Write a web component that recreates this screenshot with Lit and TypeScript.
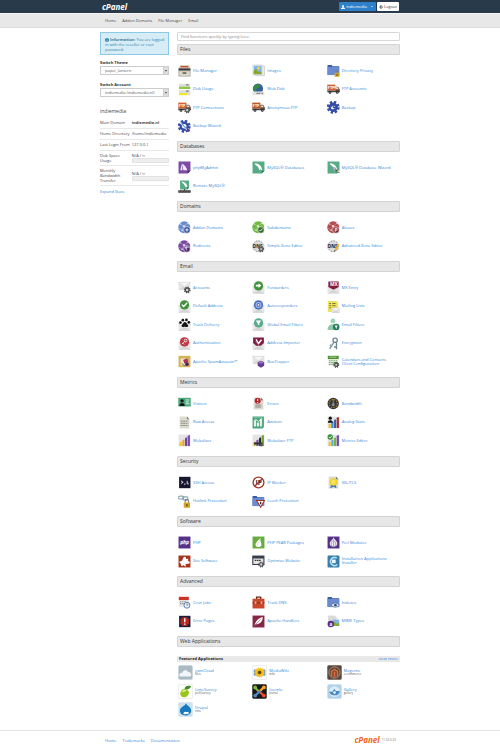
import { LitElement, html, css, svg, nothing } from "lit";
import { customElement, property } from "lit/decorators.js";

type Drawing = ReturnType<typeof svg>;

const gear = (cx: number, cy: number, r: number, color: string, hole = "#fff") => svg`
  <g transform="translate(${cx} ${cy})">
    <circle r=${r} fill="none" stroke=${color} stroke-width=${r * 0.5} stroke-dasharray="${r * 0.45} ${r * 0.335}"></circle>
    <circle r=${r * 0.68} fill=${hole} stroke=${color} stroke-width=${r * 0.45}></circle>
  </g>`;

const envelope = (y = 20) => svg`
  <rect x="2" y=${y} width="44" height="27" rx="2" fill="#e6e6e6"></rect>
  <path d="M2 ${y + 27} L20 ${y + 14} h8 L46 ${y + 27}z" fill="#d6d6d6"></path>
  <path d="M2 ${y} h44 L24 ${y + 17}z" fill="#f6f6f6" stroke="#c4c4c4" stroke-width="1.5"></path>`;

const mailWith = (color: string, glyph: Drawing) => svg`
  ${envelope(20)}<circle cx="24" cy="18" r="17" fill=${color}></circle>${glyph}`;

const folder = svg`
  <path d="M2 4h15l3 4h25v32H2z" fill="#3a5ba8"></path>
  <path d="M2 11h43v30H2z" fill="#6a8bd2"></path>`;

const lock = (x: number, y: number) => svg`
  <g transform="translate(${x} ${y})">
    <path d="M4 9V5a5 5 0 0 1 10 0v4" fill="none" stroke="#777" stroke-width="3"></path>
    <rect y="8" width="18" height="15" rx="1" fill="#d3a528"></rect>
    <path d="M7 13h4v6H7z" fill="#5d4509"></path>
  </g>`;

const truck = (color: string) => svg`
  <rect x="1" y="6" width="30" height="22" fill=${color}></rect>
  <text x="3" y="22" font-size="14" font-weight="bold" fill="#fff">FTP</text>
  <path d="M31 14h10l6 9v10H31z" fill="#7a4a35"></path>
  <path d="M34 17h6l3 6h-9z" fill="#e4eaf0"></path>
  <path d="M1 28h46v6H1z" fill="#444"></path>
  <circle cx="11" cy="35" r="5" fill="#222"></circle><circle cx="11" cy="35" r="2" fill="#bbb"></circle>
  <circle cx="38" cy="35" r="5" fill="#222"></circle><circle cx="38" cy="35" r="2" fill="#bbb"></circle>`;

const globe = (color: string, badge: Drawing) => svg`
  <circle cx="23" cy="23" r="22" fill=${color}></circle>
  <g fill="none" stroke="#fff" stroke-opacity=".5" stroke-width="2">
    <path d="M8 10l14 9 15-11M22 19l-7 15-12-8M22 19l18 7M15 34l12 9"></path></g>
  <g fill="#fff" fill-opacity=".7"><circle cx="22" cy="19" r="4"></circle><circle cx="8" cy="11" r="3"></circle>
    <circle cx="37" cy="9" r="3"></circle><circle cx="15" cy="34" r="3"></circle></g>
  ${badge}`;

const badge = (color: string, glyph: string) => svg`
  <circle cx="33" cy="33" r="12" fill=${color} stroke="#fff" stroke-width="2"></circle>
  <path d=${glyph} fill="none" stroke="#fff" stroke-width="3"></path>`;

const dns = (extra: Drawing) => svg`
  <circle cx="23" cy="23" r="20" fill="#ddd" stroke="#555" stroke-width="3" stroke-dasharray="3 3"></circle>
  <path d="M1 15h44v17H1z" fill="#d2d2d2"></path>
  <text x="3" y="29" font-size="17" font-weight="bold" fill="#222">DNS</text>${extra}`;

const dolphin = svg`
  <path d="M2 2h44v34L36 46H2z" fill="#57ab86"></path><path d="M36 46V36h10z" fill="#2f7a59"></path>
  <path d="M9 8c15 0 27 8 29 27l-8-5-3 6c-1-12-7-19-18-24 6 0 6-2 0-4z" fill="#fff"></path>`;

const bars = (colors: string[]) => svg`
  <rect x="2" y="2" width="44" height="44" fill="#e4e4e4"></rect>
  ${colors.map((c, i) => svg`<path d="M${6 + i * 10} ${32 - i * 8}l3-3h5V44h-8z" fill=${c}></path>`)}`;

const sheet = (fill: string) => svg`
  <path d="M6 2h27l9 10v34H6z" fill=${fill}></path><path d="M33 2v10h9z" fill="#777"></path>`;

const square = (color: string, inner: Drawing) => svg`
  <path d="M2 2h44v44H2z" fill=${color}></path>${inner}`;

const bee = svg`
  <rect x="1" y="12" width="46" height="24" fill="#5a8ec4"></rect>
  <circle cx="24" cy="24" r="17" fill="#f2b91c" stroke="#f7d034" stroke-width="7" stroke-dasharray="5 3"></circle>
  <circle cx="24" cy="24" r="7" fill="#5e4512"></circle>`;

const tile = (fill: string, edge: string, inner: Drawing) => svg`
  <rect x="1" y="1" width="46" height="46" rx="6" fill=${fill} stroke=${edge} stroke-width="2"></rect>${inner}`;

const ICONS: Record<string, Drawing> = {
  fileManager: svg`
    <path d="M7 5h34l5 12H2z" fill="#d9c9a4"></path><path d="M10 8h28v4H10z" fill="#b8322c"></path>
    <path d="M2 16h44v9H2z" fill="#393a3f"></path><path d="M3 25h42v20H3z" fill="#dcd8cb" stroke="#8d8778" stroke-width="2"></path>
    <path d="M17 30h14v7H17z" fill="#77736a"></path>`,
  images: svg`
    <path d="M12 7h34v36H12z" fill="#eee" stroke="#bbb" stroke-width="2"></path>
    <path d="M3 3h36v38H3z" fill="#fff" stroke="#ccc" stroke-width="2"></path>
    <path d="M6 6h30v32H6z" fill="#80b8ec"></path><circle cx="24" cy="15" r="6" fill="#f4d128"></circle>
    <path d="M6 38V26l8-9 10 13 5-5 7 9v4z" fill="#86a82c"></path>`,
  dirPrivacy: svg`${folder}${lock(28, 24)}`,
  diskUsage: svg`
    <rect x="4" y="3" width="41" height="19" fill="#ddd"></rect><path d="M4 14h41v8H4z" fill="#8cc63c"></path>
    <rect x="4" y="26" width="41" height="19" fill="#ddd"></rect><path d="M4 37h29v8H4z" fill="#ecec20"></path>
    <path d="M30 7h9M30 30h9" stroke="#444" stroke-width="3"></path>`,
  webDisk: svg`
    <circle cx="22" cy="21" r="19" fill="#35609c"></circle><path d="M4 20C7 8 20 0 31 7l-6 11-8 2-5 12c-5-3-8-7-8-12z" fill="#3c8a42"></path>
    <rect x="1" y="31" width="45" height="14" rx="2" fill="#e5e5e5"></rect><path d="M16 38h15M35 38h6" stroke="#555" stroke-width="3"></path>`,
  ftp: svg`${truck("#d3622c")}<circle cx="31" cy="16" r="5" fill="#f6d6b0"></circle>`,
  ftpConn: svg`${truck("#cf622d")}${gear(34, 34, 9, "#555", "#ddd")}`,
  ftpAnon: truck("#bb562a"),
  backup: svg`${gear(23, 23, 19, "#344ca8")}<path d="M15 23a8 8 0 1 1 8 8M23 17v7h6" fill="none" stroke="#344ca8" stroke-width="4"></path>`,
  backupWizard: svg`${gear(23, 23, 19, "#344ca8")}<path d="M7 8l29 31" stroke="#cfe0f4" stroke-width="6"></path>
    <path d="M13 13l24 25" stroke="#3b6cc0" stroke-width="3"></path><circle cx="38" cy="38" r="6" fill="#673594"></circle>`,
  phpMyAdmin: svg`<path d="M2 2h44v34L36 46H2z" fill="#7d4ba3"></path><path d="M36 46V36h10z" fill="#50277a"></path>
    <path d="M14 9c10 5 18 14 20 25H20zM9 34c1-9 3-16 4-23l4 23z" fill="#f2eaf8"></path>`,
  mysql: dolphin,
  mysqlWizard: svg`${dolphin}<path d="M24 25l21 18" stroke="#555" stroke-width="5"></path><circle cx="28" cy="28" r="5" fill="#c9a2df"></circle><circle cx="42" cy="38" r="4" fill="#e2d9a1"></circle>`,
  mysqlRemote: svg`<g transform="translate(6 0) scale(.76)">${dolphin}</g><path d="M24 34v6" stroke="#333" stroke-width="4"></path><path d="M1 38h46v9H1z" fill="#333"></path><path d="M4 42h40" stroke="#aaa" stroke-width="2" stroke-dasharray="3 3"></path>`,
  addon: globe("#688bd0", badge("#2c479c", "M33 26v14M26 33h14")),
  subdomain: globe("#70b840", badge("#376f2c", "M27 33l4 4 8-9")),
  alias: globe("#b64b50", badge("#82202a", "M30 40V27h7v7h-7")),
  redirect: globe("#794aa1", badge("#512674", "M39 28c-10-5-14 7-5 9M32 32l-5-4 7-4")),
  zone: dns(gear(34, 34, 9, "#555", "#bbb")),
  zoneAdv: dns(svg`<path d="M26 43l4-11 11-18 5 4-11 18z" fill="#edb227"></path><path d="M26 43l2-6 4 3z" fill="#333"></path>`),
  mail: svg`${envelope(5)}${gear(34, 33, 10, "#444", "#ddd")}`,
  forward: mailWith("#44923c", svg`<path d="M14 14h10V8l11 9-11 9v-6H14z" fill="#fff"></path>`),
  mx: svg`${envelope(19)}<path d="M5 2h38v20L24 32 5 22z" fill="#841b3b"></path><text x="11" y="20" font-size="18" font-weight="bold" fill="#fff">MX</text>`,
  check: mailWith("#43923b", svg`<path d="M14 17l7 7 13-14" fill="none" stroke="#fff" stroke-width="5"></path>`),
  auto: mailWith("#4c70c0", svg`<circle cx="24" cy="18" r="9" fill="none" stroke="#a7bbec" stroke-width="4"></circle><circle cx="24" cy="18" r="3" fill="#fff"></circle>`),
  lists: svg`<path d="M3 4h32l6 6v34H3z" fill="#eee25c"></path><path d="M8 13h7M19 13h13M8 21h7M19 21h13M8 29h7" stroke="#6a6636" stroke-width="3"></path><g transform="translate(16 17) scale(.68)">${envelope(18)}</g>`,
  paw: svg`${envelope(20)}<g fill="#161616"><path d="M15 32c-5-5 1-8 4-13 4-6 10-5 13 0 3 5 9 8 4 13-5 4-8-1-12 0-4 0-6 3-9 0z"></path><circle cx="9" cy="17" r="5"></circle><circle cx="18" cy="8" r="5"></circle><circle cx="31" cy="7" r="5"></circle><circle cx="40" cy="16" r="5"></circle></g>`,
  filter: mailWith("#57ad8b", svg`<path d="M14 9h20l-7 10v8l-6-3v-5z" fill="#fff"></path>`),
  userFilter: svg`<circle cx="22" cy="11" r="9" fill="#9fd3b7"></circle><path d="M2 44c0-14 8-21 20-21s18 7 20 21z" fill="#8fc9aa"></path><circle cx="34" cy="33" r="12" fill="#207b57"></circle><path d="M28 28h12l-4 6v6l-4-2v-4z" fill="#fff"></path>`,
  auth: mailWith("#bd3944", svg`<circle cx="28" cy="13" r="5" fill="none" stroke="#fff" stroke-width="3"></circle><path d="M24 17l-9 9M18 23l4 4" stroke="#fff" stroke-width="3"></path>`),
  importer: svg`${envelope(20)}<path d="M4 2h40v20L33 32H15L4 22z" fill="#812144"></path><path d="M15 9l9 15 11-14" stroke="#fff" stroke-width="5" fill="none"></path><path d="M15 17l9 9" stroke="#d7a6b8" stroke-width="3"></path>`,
  keys: svg`<g fill="none" stroke="#6e8797" stroke-width="5"><circle cx="30" cy="12" r="8"></circle><path d="M26 19L10 43M18 34l-7-5M35 21v24M34 37h-8"></path></g><path d="M24 19L8 43" stroke="#b8cbd4" stroke-width="2"></path>`,
  spam: svg`<path d="M2 3h44v42H2z" fill="#d3b65a"></path><path d="M10 13h24v25H10z" fill="#f2e8c8"></path><path d="M19 18l15-6 4 14-14 6z" fill="#aa3165"></path><circle cx="33" cy="34" r="7" fill="#482d53"></circle><path d="M13 31l13 10" stroke="#555" stroke-width="3"></path>`,
  box: svg`${envelope(5)}<path d="M21 27l12-6 12 6v13l-12 7-12-7z" fill="#673b91"></path><path d="M21 27l12 6 12-6-12-6z" fill="#9570b8"></path>`,
  calendar: svg`<rect x="3" y="3" width="40" height="38" fill="#eee"></rect><path d="M3 3h40v12H3z" fill="#4b922f"></path><path d="M8 8h27" stroke="#fff" stroke-width="2"></path><path d="M8 21h29M8 28h29M8 35h20" stroke="#6ba852" stroke-width="4" stroke-dasharray="5 3"></path>${gear(34, 36, 9, "#444", "#ccc")}`,
  visitors: svg`<rect x="1" y="3" width="46" height="32" fill="#49a77b"></rect><circle cx="15" cy="14" r="6" fill="#151515"></circle><path d="M5 33c0-15 20-15 20 0z" fill="#151515"></path><path d="M28 11h14M28 18h12M28 25h14" stroke="#fff" stroke-width="3"></path>`,
  errors: svg`${sheet("#ddd9cf")}<path d="M12 30h22M12 37h22" stroke="#777" stroke-width="3"></path><circle cx="21" cy="14" r="11" fill="#b52025"></circle><path d="M21 6v9M21 18v4" stroke="#fff" stroke-width="4"></path>`,
  bandwidth: svg`<circle cx="23" cy="24" r="21" fill="#353535"></circle><circle cx="23" cy="24" r="15" fill="none" stroke="#be8f3c" stroke-width="4" stroke-dasharray="4 5"></circle><path d="M23 8v18" stroke="#7cba48" stroke-width="3"></path><circle cx="23" cy="28" r="6" fill="#888"></circle>`,
  raw: svg`${sheet("#dcdccc")}<path d="M10 19h28M10 27h28M10 35h28" stroke="#777" stroke-width="3" stroke-dasharray="7 2"></path>`,
  awstats: svg`<path d="M2 2h42v39l-5 5H2z" fill="#4aa57b"></path><path d="M7 6h31M8 16h6v22H8zM19 25h6v13h-6zM30 11h6v27h-6z" fill="#fff" stroke="#fff"></path><path d="M12 12l13 8 12-12" stroke="#fff" stroke-width="3" fill="none"></path>`,
  analog: svg`${bars(["#edc12f", "#4286ca", "#385eaa", "#a82c26"])}<circle cx="12" cy="8" r="6" fill="#111"></circle><path d="M3 25c0-12 18-12 18 0z" fill="#111"></path>`,
  webalizer: bars(["#ebc72b", "#eba12c", "#6a45a2", "#7a4caa"]),
  webalizerFtp: svg`${bars(["#ebc72b", "#7550a8", "#282828", "#6e9f31"])}<path d="M7 31h31v8H7z" fill="#333"></path><circle cx="34" cy="40" r="6" fill="#555"></circle>`,
  metrics: svg`${bars(["#eec62f", "#58add8", "#78b23b", "#7546a6"])}<circle cx="12" cy="11" r="10" fill="#3f8f3c"></circle><path d="M7 11l4 4 7-8" fill="none" stroke="#fff" stroke-width="3"></path>`,
  ssh: svg`<rect x="4" y="3" width="42" height="42" fill="#16172e"></rect><path d="M11 18l8 5-8 5M22 30h6M34 18v11h6" fill="none" stroke="#fff" stroke-width="3"></path>`,
  ipBlock: svg`<circle cx="24" cy="24" r="20" fill="#fff" stroke="#9d392b" stroke-width="5"></circle><text x="13" y="33" font-size="24" font-weight="bold" fill="#222">IP</text><path d="M38 10L10 38" stroke="#9d392b" stroke-width="5"></path>`,
  ssl: svg`${sheet("#dadad2")}<path d="M15 32l-3 13 12-5 11 5-3-13z" fill="#3975ba"></path><circle cx="24" cy="22" r="14" fill="#f0cf25"></circle><circle cx="24" cy="22" r="9" fill="#fae35b"></circle>`,
  hotlink: svg`<g fill="none" stroke="#8aa4b2" stroke-width="4"><rect x="2" y="4" width="19" height="11" rx="5"></rect><rect x="17" y="7" width="20" height="11" rx="5"></rect></g><g transform="translate(21 17) scale(1.3)">${lock(0, 0)}</g>`,
  leech: svg`${folder}<path d="M17 20h29L32 45z" fill="#fff" stroke="#aa3020" stroke-width="4"></path><path d="M32 25v9" stroke="#333" stroke-width="5"></path>`,
  php: square("#56318a", svg`<ellipse cx="24" cy="24" rx="20" ry="11" fill="#66439a"></ellipse><text x="8" y="29" font-size="18" font-weight="bold" font-style="italic" fill="#fff">php</text>`),
  pear: square("#68ac3f", svg`<path d="M31 6c-5 9-18 15-18 26 0 13 22 11 22 0 0-8-6-16-4-26z" fill="#fff"></path><path d="M29 13c-1 10-10 14-9 24" stroke="#b5d7a3" stroke-width="2" fill="none"></path>`),
  perl: square("#56318a", svg`<path d="M24 4c0 10-14 13-14 25 0 15 28 15 28 0C38 17 26 14 24 4z" fill="#eee"></path><path d="M24 13v28M20 18c-7 10-5 18 1 22M28 18c7 10 5 18-1 22" stroke="#7c5da2" stroke-width="2" fill="none"></path>`),
  siteSoftware: square("#a8321a", svg`<path d="M20 9c5-6 13 0 9 6l9-1-1 9c7-2 10 7 2 9l-11 1 1 10-10-6c-2 6-10 3-8-4l-7-8 11-4z" fill="#fff"></path>`),
  optimize: svg`<rect x="3" y="4" width="41" height="31" fill="#e5e5e5" stroke="#343b4c" stroke-width="4"></rect><path d="M3 4h41v9H3z" fill="#343b4c"></path><path d="M10 20h22" stroke="#333" stroke-width="5" stroke-dasharray="6 2"></path>${gear(34, 35, 9, "#555", "#ddd")}`,
  installatron: svg`<rect x="2" y="2" width="44" height="44" rx="4" fill="#397da8"></rect><path d="M36 11C15 2 3 29 22 38c6 3 12 1 16-3" fill="none" stroke="#aee1f7" stroke-width="6"></path><path d="M18 17h14v13H18z" fill="#eef9ff"></path>`,
  cron: svg`<rect x="3" y="3" width="37" height="37" fill="#e8e8e8"></rect><path d="M3 3h37v12H3z" fill="#cb3429"></path><path d="M8 21h24M8 28h14" stroke="#777" stroke-width="4" stroke-dasharray="4 4"></path><circle cx="33" cy="34" r="11" fill="#eef4ff" stroke="#3967a7" stroke-width="3"></circle><path d="M33 27v8l5-3" fill="none" stroke="#333" stroke-width="2"></path>`,
  trackDns: svg`<path d="M17 13V4h15v9" fill="none" stroke="#6b2a18" stroke-width="5"></path><path d="M2 10h44v36H2z" fill="#c9482a"></path><path d="M2 24h44v3H2z" fill="#7d2515"></path><path d="M10 20h6v9h-6zM32 20h6v9h-6z" fill="#ebbba5"></path>`,
  indexes: svg`${folder}<path d="M15 34q15-16 31 0-15 15-31 0z" fill="#e6edf4" stroke="#555" stroke-width="2"></path><circle cx="31" cy="34" r="5" fill="#28548e"></circle>`,
  errorPages: svg`<path d="M4 3h42v42H4z" fill="#17213f"></path><path d="M18 7h14l9 9v15l-9 10H18L9 31V16z" fill="#b02723"></path><path d="M25 12v15M25 31v5" stroke="#fff" stroke-width="5"></path>`,
  handlers: square("#842846", svg`<path d="M8 42C13 23 22 11 40 7 39 25 28 34 14 34z" fill="#fff"></path><path d="M6 43L33 14" stroke="#842846" stroke-width="2"></path>`),
  mime: svg`<path d="M4 2h24l8 8v28H4z" fill="#dadada"></path><path d="M21 17h24v24H21z" fill="#7db7e4"></path><path d="M21 41V31l8-6 7 8 9-5v13z" fill="#83ab39"></path><circle cx="14" cy="33" r="12" fill="#56308a"></circle><text x="9" y="39" font-size="17" font-weight="bold" fill="#fff">a</text>`,
  ownCloud: tile("#a9bac5", "#d9e0e5", svg`<path d="M6 37c-5-8 3-14 8-12 1-10 16-11 18-2 9-2 14 9 8 14z" fill="#f3f6f8"></path>`),
  mediaWiki: tile("#fff", "#ddd", svg`<g transform="translate(5 5) scale(.8)">${bee}</g>`),
  magento: tile("#5a473b", "#8a7b70", svg`<circle cx="24" cy="24" r="18" fill="none" stroke="#a59585" stroke-width="3"></circle><path d="M12 19l12-8 12 8v16l-5 3V21l-7-4-7 4v17l-5-3zM21 21h6v18h-6z" fill="#e36b35"></path>`),
  lime: tile("#fff", "#ddd", svg`<path d="M10 22c6-10 22-7 25 3 1 13-11 20-19 17C7 39 5 30 10 22z" fill="#9ac51c"></path><path d="M21 15C24 5 31 5 42 7c-4 8-11 12-21 10z" fill="#3f8d26"></path><path d="M14 25q6-6 12-3" stroke="#e6f295" stroke-width="5" fill="none"></path>`),
  joomla: tile("#171717", "#555", svg`<g fill="none" stroke-width="7"><path d="M10 12l16 16" stroke="#7fbd42"></path><path d="M38 10L22 26" stroke="#f5a72c"></path><path d="M38 38L22 22" stroke="#ea4c30"></path><path d="M10 38l16-16" stroke="#4d88c5"></path></g><circle cx="10" cy="11" r="6" fill="#7fbd42"></circle><circle cx="38" cy="11" r="6" fill="#f5a72c"></circle><circle cx="38" cy="37" r="6" fill="#ea4c30"></circle><circle cx="10" cy="37" r="6" fill="#4d88c5"></circle>`),
  gallery: tile("#b1d3ea", "#d6e5ee", svg`<circle cx="24" cy="24" r="17" fill="#d9ecf8"></circle><path d="M6 25h11l7-10 4 7h13c-1 11-9 15-19 14-8 0-12-4-16-11z" fill="#4789bd"></path><circle cx="24" cy="27" r="4" fill="#fff"></circle>`),
  drupal: tile("#cae1ef", "#dde8ee", svg`<path d="M26 4c0 7 16 11 16 23 0 21-36 21-36 1C6 16 22 14 26 4z" fill="#1678bd"></path><path d="M18 34c6-7 9 1 14-3 4 0 3 8-1 8-4-3-8 2-11 0-3-1-3-3-2-5z" fill="#fff"></path>`),
};

const drawing = (name: string) => html`<svg class="icon" viewBox="0 0 48 48" aria-hidden="true">${ICONS[name]}</svg>`;

type Item = [icon: string, label: string, note?: string];

const GROUPS: { title: string; items: Item[] }[] = [
  { title: "Files", items: [
    ["fileManager", "File Manager"], ["images", "Images"], ["dirPrivacy", "Directory Privacy"],
    ["diskUsage", "Disk Usage"], ["webDisk", "Web Disk"], ["ftp", "FTP Accounts"],
    ["ftpConn", "FTP Connections"], ["ftpAnon", "Anonymous FTP"], ["backup", "Backup"],
    ["backupWizard", "Backup Wizard"]] },
  { title: "Databases", items: [
    ["phpMyAdmin", "phpMyAdmin"], ["mysql", "MySQL® Databases"], ["mysqlWizard", "MySQL® Database Wizard"],
    ["mysqlRemote", "Remote MySQL®"]] },
  { title: "Domains", items: [
    ["addon", "Addon Domains"], ["subdomain", "Subdomains"], ["alias", "Aliases"],
    ["redirect", "Redirects"], ["zone", "Simple Zone Editor"], ["zoneAdv", "Advanced Zone Editor"]] },
  { title: "Email", items: [
    ["mail", "Accounts"], ["forward", "Forwarders"], ["mx", "MX Entry"],
    ["check", "Default Address"], ["auto", "Autoresponders"], ["lists", "Mailing Lists"],
    ["paw", "Track Delivery"], ["filter", "Global Email Filters"], ["userFilter", "Email Filters"],
    ["auth", "Authentication"], ["importer", "Address Importer"], ["keys", "Encryption"],
    ["spam", "Apache SpamAssassin™"], ["box", "BoxTrapper"], ["calendar", "Calendars and Contacts Client Configuration"]] },
  { title: "Metrics", items: [
    ["visitors", "Visitors"], ["errors", "Errors"], ["bandwidth", "Bandwidth"],
    ["raw", "Raw Access"], ["awstats", "Awstats"], ["analog", "Analog Stats"],
    ["webalizer", "Webalizer"], ["webalizerFtp", "Webalizer FTP"], ["metrics", "Metrics Editor"]] },
  { title: "Security", items: [
    ["ssh", "SSH Access"], ["ipBlock", "IP Blocker"], ["ssl", "SSL/TLS"],
    ["hotlink", "Hotlink Protection"], ["leech", "Leech Protection"]] },
  { title: "Software", items: [
    ["php", "PHP"], ["pear", "PHP PEAR Packages"], ["perl", "Perl Modules"],
    ["siteSoftware", "Site Software"], ["optimize", "Optimize Website"], ["installatron", "Installatron Applications Installer"]] },
  { title: "Advanced", items: [
    ["cron", "Cron Jobs"], ["trackDns", "Track DNS"], ["indexes", "Indexes"],
    ["errorPages", "Error Pages"], ["handlers", "Apache Handlers"], ["mime", "MIME Types"]] },
];

const APPS: Item[] = [
  ["ownCloud", "ownCloud", "files"], ["mediaWiki", "MediaWiki", "wiki"], ["magento", "Magento", "e-commerce"],
  ["lime", "LimeSurvey", "poll/survey"], ["joomla", "Joomla", "portal"], ["gallery", "Gallery", "gallery"],
  ["drupal", "Drupal", "cms"],
];

@customElement("feature-group")
export class FeatureGroup extends LitElement {
  @property() heading = "";
  @property({ attribute: false }) items: Item[] = [];
  @property({ type: Boolean, reflect: true }) featured = false;

  static styles = css`
    :host { display: block; }
    * { box-sizing: border-box; }
    .title {
      margin: 0; height: 11px; padding: 0 2px; line-height: 9px; font-size: 5px; font-weight: 400;
      color: #333; background: #e7e7e7; border: 1px solid #d4d4d4; border-radius: 1px;
    }
    .bar {
      display: flex; justify-content: space-between; align-items: center; margin-top: 9px;
      height: 6px; padding: 0 2px; line-height: 6px; background: #e9e9e9; color: #222;
    }
    .bar h3 { margin: 0; font-size: 4px; }
    .grid {
      display: grid; grid-template-columns: repeat(3, 1fr); grid-auto-rows: 19px 18px;
      margin: 0; padding: 6px 0; list-style: none;
    }
    .item { display: flex; align-items: center; gap: 2px; padding: 0 8px 0 1px; }
    .icon { flex: none; width: 13px; height: 13px; display: block; }
    .text { display: flex; flex-direction: column; line-height: 4px; }
    a { color: #2f86d6; text-decoration: none; }
    .note { font-size: 3px; line-height: 3px; color: #555; }
    :host([featured]) .grid { padding: 1px 0 0; }
    :host([featured]) .icon { width: 15px; height: 15px; }
  `;

  render() {
    return html`
      <h2 class="title">${this.heading}</h2>
      ${this.featured
        ? html`<div class="bar"><h3>Featured Applications</h3><a href="#more">view more</a></div>`
        : nothing}
      <ul class="grid">
        ${this.items.map(([icon, label, note]) => html`
          <li class="item">
            ${drawing(icon)}
            <span class="text"><a href="#${icon}">${label}</a>${note ? html`<span class="note">${note}</span>` : nothing}</span>
          </li>`)}
      </ul>`;
  }
}

@customElement("app-root")
export class AppRoot extends LitElement {
  static styles = css`
    :host { display: block; background: #fff; color: #444; font: 4px/5px "Open Sans", sans-serif; }
    * { box-sizing: border-box; }
    a { color: #2f86d6; text-decoration: none; }
    .wrap { width: 60%; margin: 0 auto; display: flex; align-items: center; }
    .top { background: #293a4a; border-bottom: 1px solid #f5f5f5; }
    .top .wrap { height: 13px; padding: 0 1px 0 2px; gap: 1px; }
    .logo { font-size: 8px; line-height: 10px; font-weight: 700; font-style: italic; color: #fff; }
    .top .logo { margin-right: auto; }
    .btn {
      display: flex; align-items: center; gap: 1px; height: 9px; padding: 0 2px; border: 0; border-radius: 1px;
      font: inherit; color: #333; background: #fff;
    }
    .btn.user { background: #2f80cb; color: #fff; }
    .btn svg { width: 4px; height: 4px; }
    .caret { margin: 0 1px 0 3px; border: 1px solid transparent; border-top-color: #fff; border-bottom: 0; }
    .nav { background: #e8e8e8; border-bottom: 1px solid #ddd; }
    .nav .wrap { height: 13px; padding: 0 5px; gap: 6px; }
    .nav a { color: #444; }
    .main { align-items: flex-start; gap: 8px; padding-top: 4px; }
    .side { flex: 0 0 23%; }
    .content { flex: 1; min-width: 0; }
    .info {
      margin: 0 0 5px; padding: 4px 0 4px 4px; height: 23px; color: #31809f; background: #d6edf8; border: 1px solid #8cc9e4;
    }
    .info svg { width: 4px; height: 4px; vertical-align: -1px; }
    .field { margin-bottom: 7px; }
    .field label { display: block; height: 6px; font-weight: 700; color: #333; }
    .pick { display: flex; height: 9px; border: 1px solid #ccc; }
    .pick select {
      flex: 1; min-width: 0; padding: 0 4px; border: 0; appearance: none; background: #fff;
      font: inherit; line-height: 7px; color: #555;
    }
    .pick .arrow { flex: none; width: 5px; height: 7px; background: #ddd; border-left: 1px solid #ccc; }
    .arrow path { fill: #555; }
    .account { margin: 11px 0 4px; font-size: 5px; line-height: 6px; font-weight: 400; color: #444; }
    .stats { width: 100%; border-collapse: collapse; table-layout: fixed; }
    .stats th { width: 46%; text-align: left; font-weight: 400; }
    .stats th, .stats td { padding: 2px 0 3px; border-bottom: 1px solid #e8e8e8; vertical-align: top; white-space: nowrap; }
    .stats .wide { white-space: normal; padding-right: 6px; }
    .stats .tall th, .stats .tall td { padding: 2px 0; }
    .stats .tall td { vertical-align: middle; }
    .meter { height: 5px; background: #eee; border: 1px solid #e2e2e2; border-radius: 1px; }
    .expand { display: block; margin-top: 3px; }
    .search {
      display: block; width: 100%; height: 9px; margin-bottom: 3px; padding: 0 3px; border: 1px solid #d8d8d8;
      border-radius: 1px; font: inherit; color: #444; outline: none;
    }
    .search::placeholder { color: #888; }
    .foot { margin-top: 11px; border-top: 1px solid #e4e4e4; }
    .foot .wrap { height: 18px; padding: 0 4px 0 5px; gap: 6px; }
    .brand { display: flex; align-items: center; gap: 2px; margin-left: auto; }
    .foot .logo { color: #f26522; }
    .version { font-size: 3px; color: #777; }
  `;

  private picker(id: string, label: string, value: string) {
    return html`
      <div class="field">
        <label for=${id}>${label}</label>
        <div class="pick">
          <select id=${id}><option>${value}</option></select>
          <svg class="arrow" viewBox="0 0 5 7" aria-hidden="true"><path d="M1 3h3L2.500 5z"></path></svg>
        </div>
      </div>`;
  }

  render() {
    return html`
      <header class="top">
        <div class="wrap">
          <span class="logo">cPanel</span>
          <button class="btn user">
            <svg viewBox="0 0 8 8" aria-hidden="true"><circle cx="4" cy="2" r="2" fill="#fff"></circle><path d="M0 8c0-5 8-5 8 0z" fill="#fff"></path></svg>
            indiemedia<span class="caret"></span>
          </button>
          <button class="btn">
            <svg viewBox="0 0 8 8" aria-hidden="true"><path d="M5 1a3 3 0 1 0 0 6M3 4h5" fill="none" stroke="#222" stroke-width="1.500"></path></svg>
            Logout
          </button>
        </div>
      </header>
      <nav class="nav">
        <div class="wrap">
          ${["Home", "Addon Domains", "File Manager", "Email"].map((t) => html`<a href="#nav">${t}</a>`)}
        </div>
      </nav>
      <main class="wrap main">
        <aside class="side">
          <p class="info">
            <svg viewBox="0 0 8 8" aria-hidden="true"><circle cx="4" cy="4" r="4" fill="#1a7aa0"></circle><path d="M4 1v1M4 3v4" stroke="#fff" stroke-width="1.500"></path></svg>
            <b>Information:</b> You are logged in with the reseller or root password.
          </p>
          ${this.picker("theme", "Switch Theme", "paper_lantern")}
          ${this.picker("account", "Switch Account", "indiemedia (indiemedia.nl)")}
          <h2 class="account">indiemedia</h2>
          <table class="stats">
            <tr><th scope="row">Main Domain</th><td><b>indiemedia.nl</b></td></tr>
            <tr><th scope="row">Home Directory</th><td>/home/indiemedia</td></tr>
            <tr><th scope="row">Last Login From</th><td>127.0.0.1</td></tr>
            <tr class="tall"><th scope="row" class="wide">Disk Space Usage</th><td>N/A / ∞<div class="meter"></div></td></tr>
            <tr class="tall"><th scope="row" class="wide">Monthly Bandwidth Transfer</th><td>N/A / ∞<div class="meter"></div></td></tr>
          </table>
          <a class="expand" href="#stats">Expand Stats</a>
        </aside>
        <div class="content">
          <input class="search" type="text" aria-label="Find functions" placeholder="Find functions quickly by typing here." />
          ${GROUPS.map((g) => html`<feature-group .heading=${g.title} .items=${g.items}></feature-group>`)}
          <feature-group featured .heading=${"Web Applications"} .items=${APPS}></feature-group>
        </div>
      </main>
      <footer class="foot">
        <div class="wrap">
          <a href="#home">Home</a><a href="#trademarks">Trademarks</a><a href="#docs">Documentation</a>
          <div class="brand"><span class="logo">cPanel</span><span class="version">11.50.0.30</span></div>
        </div>
      </footer>`;
  }
}
